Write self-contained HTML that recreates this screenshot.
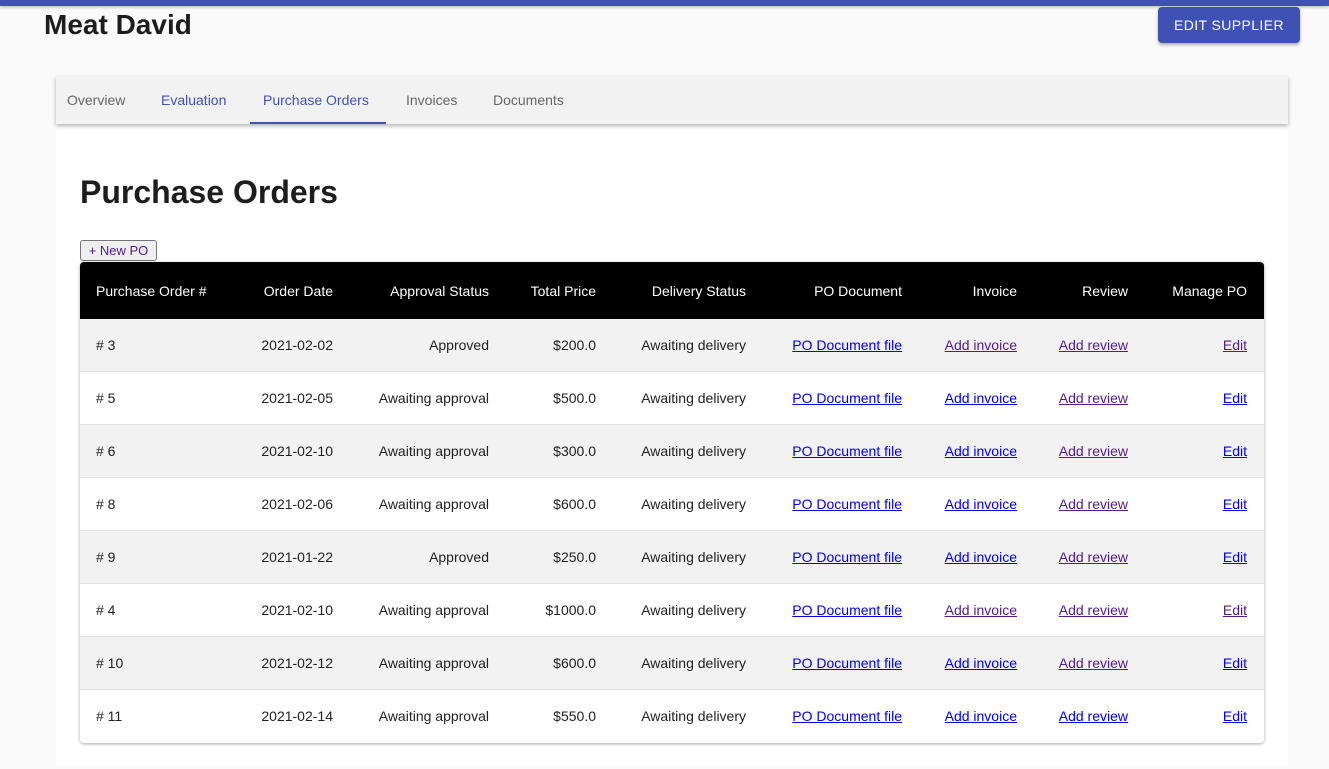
<!DOCTYPE html>
<html><head><style>
*{margin:0;padding:0;box-sizing:border-box}
body{width:1329px;height:769px;background:#fafafa;font-family:"Liberation Sans",Arial,sans-serif;position:relative;overflow:hidden;color:#212121}
.top{position:absolute;left:0;top:0;width:1329px;height:6px;background:#3f51b5;box-shadow:0 1px 3px rgba(0,0,0,.3)}
h1.name{position:absolute;left:44px;top:9px;font-size:28px;font-weight:bold;color:#1d1d1d}
.btn{position:absolute;left:1158px;top:7px;width:142px;height:36px;background:#3f51b5;color:#fff;border-radius:4px;font-size:14px;letter-spacing:.4px;line-height:36px;text-align:center;box-shadow:0 2px 3px rgba(0,0,0,.3)}
.card{position:absolute;left:56px;top:124px;width:1232px;height:642px;background:#fff}
.tabs{position:absolute;left:56px;top:76px;width:1232px;height:48px;background:#f2f2f2;box-shadow:0 2px 4px rgba(0,0,0,.3)}
.tab{position:absolute;top:0;height:48px;line-height:48px;font-size:14px;color:#666}
.tab.b{color:#3f51b5}
.ind{position:absolute;left:194px;top:46px;width:136px;height:2px;background:#3f51b5}
h2{position:absolute;left:80px;top:174px;font-size:32px;font-weight:bold;color:#1d1d1d}
.new{position:absolute;left:80px;top:240px;width:77px;height:21px;border:1px solid #767676;border-radius:3px;background:#efefef;font-size:13px;color:#551a8b;text-align:center;line-height:19px}
.tbl{position:absolute;left:80px;top:262px;width:1184px;height:481px;border-radius:4px;overflow:hidden;box-shadow:0 1px 3px rgba(0,0,0,.35);background:#fff}
.row{position:relative;height:53px;border-bottom:1px solid #e0e0e0;font-size:14px}
.row.h{height:57px;background:#000;color:#fff;border:none}
.row.g{background:#f2f2f2}
.row span{position:absolute;top:50%;transform:translateY(-50%);white-space:nowrap}
a{text-decoration:underline}
.bl{color:#0000ee}.pu{color:#551a8b}
</style></head><body>
<div class="top"></div>
<h1 class="name">Meat David</h1>
<div class="btn">EDIT SUPPLIER</div>
<div class="card"></div>
<div class="tabs">
<div class="tab" style="left:11px">Overview</div>
<div class="tab b" style="left:105px">Evaluation</div>
<div class="tab b" style="left:207px">Purchase Orders</div>
<div class="tab" style="left:350px">Invoices</div>
<div class="tab" style="left:437px">Documents</div>
<div class="ind"></div>
</div>
<h2>Purchase Orders</h2>
<div class="new">+ New PO</div>
<div class="tbl">
<div class="row h"><span style="left:16px">Purchase Order #</span><span style="right:931px">Order Date</span><span style="right:775px">Approval Status</span><span style="right:668px">Total Price</span><span style="right:518px">Delivery Status</span><span style="right:362px">PO Document</span><span style="right:247px">Invoice</span><span style="right:136px">Review</span><span style="right:17px">Manage PO</span></div>
<div id="rows"></div>
</div>
<script>
var d=[["# 3","2021-02-02","Approved","$200.0","ppp"],["# 5","2021-02-05","Awaiting approval","$500.0","bpb"],["# 6","2021-02-10","Awaiting approval","$300.0","bpb"],["# 8","2021-02-06","Awaiting approval","$600.0","bpb"],["# 9","2021-01-22","Approved","$250.0","bpb"],["# 4","2021-02-10","Awaiting approval","$1000.0","ppp"],["# 10","2021-02-12","Awaiting approval","$600.0","bpb"],["# 11","2021-02-14","Awaiting approval","$550.0","bbb"]];
var h="";d.forEach(function(r,i){var c=function(k){return r[4][k]=="p"?"pu":"bl"};
h+='<div class="row'+(i%2==0?' g':'')+'"'+(i==7?' style="border:none;height:52px"':'')+'><span style="left:16px">'+r[0]+'</span><span style="right:931px">'+r[1]+'</span><span style="right:775px">'+r[2]+'</span><span style="right:668px">'+r[3]+'</span><span style="right:518px">Awaiting delivery</span><span style="right:362px"><a class="bl">PO Document file</a></span><span style="right:247px"><a class="'+c(0)+'">Add invoice</a></span><span style="right:136px"><a class="'+c(1)+'">Add review</a></span><span style="right:17px"><a class="'+c(2)+'">Edit</a></span></div>';});
document.getElementById("rows").innerHTML=h;
</script>
</body></html>
